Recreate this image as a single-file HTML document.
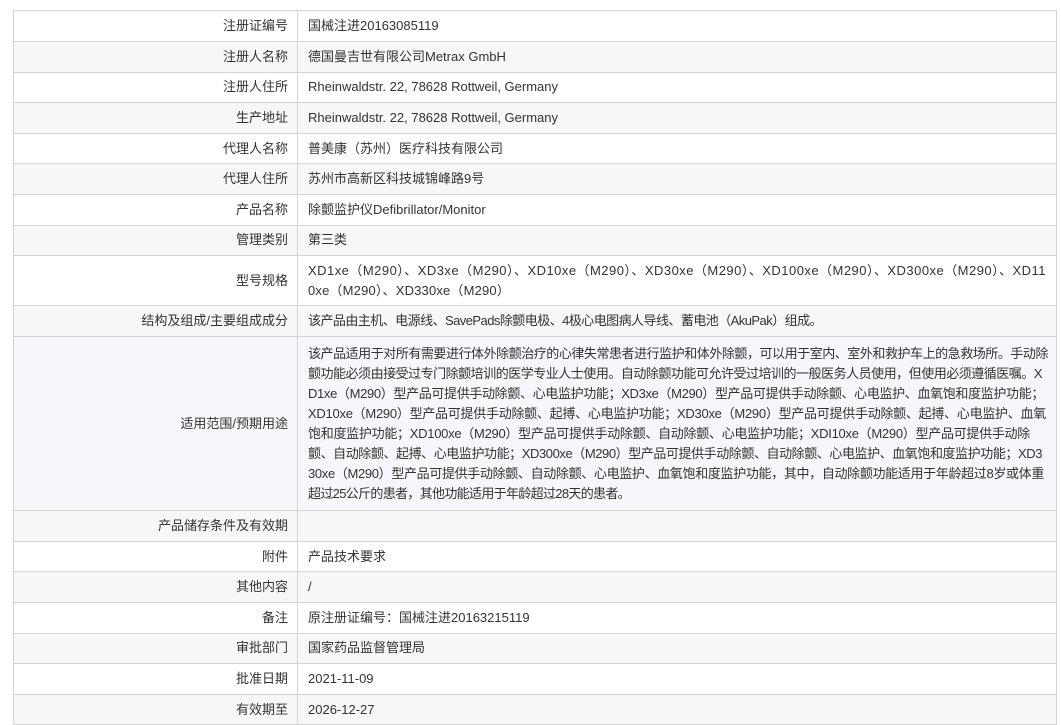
<!DOCTYPE html>
<html><head><meta charset="utf-8"><style>
body{margin:0;background:#fff;font-family:"Liberation Sans","Noto Sans CJK SC",sans-serif;font-size:13px;color:#333;}
table{position:absolute;left:13px;top:10px;width:1044px;border-collapse:collapse;table-layout:fixed;}
td{border:1px solid #d4d4d4;padding:0;line-height:20px;white-space:nowrap;overflow:hidden;}
td.l{width:274px;text-align:right;padding-right:9px;}
td.v{padding-left:10px;}
tr{height:30.6px;}
tr.g td{background:#f7f7f7;}
tr.b td{background:#f5f7fa;}
.fit{display:inline-block;white-space:nowrap;}
</style></head><body>
<table>
<tr style="height:31px"><td class="l">注册证编号</td><td class="v">国械注进20163085119</td></tr>
<tr class="g"><td class="l">注册人名称</td><td class="v">德国曼吉世有限公司Metrax GmbH</td></tr>
<tr><td class="l">注册人住所</td><td class="v">Rheinwaldstr. 22, 78628 Rottweil, Germany</td></tr>
<tr class="g"><td class="l">生产地址</td><td class="v">Rheinwaldstr. 22, 78628 Rottweil, Germany</td></tr>
<tr><td class="l">代理人名称</td><td class="v">普美康（苏州）医疗科技有限公司</td></tr>
<tr class="g"><td class="l">代理人住所</td><td class="v">苏州市高新区科技城锦峰路9号</td></tr>
<tr><td class="l">产品名称</td><td class="v">除颤监护仪Defibrillator/Monitor</td></tr>
<tr class="g"><td class="l">管理类别</td><td class="v">第三类</td></tr>
<tr style="height:50px"><td class="l">型号规格</td><td class="v"><span class="fit" data-w="738">XD1xe（M290）、XD3xe（M290）、XD10xe（M290）、XD30xe（M290）、XD100xe（M290）、XD300xe（M290）、XD11</span><br><span class="fit" data-w="202">0xe（M290）、XD330xe（M290）</span></td></tr>
<tr class="g" style="height:31px"><td class="l">结构及组成/主要组成成分</td><td class="v"><span class="fit" data-w="514">该产品由主机、电源线、SavePads除颤电极、4极心电图病人导线、蓄电池（AkuPak）组成。</span></td></tr>
<tr class="b" style="height:174px"><td class="l">适用范围/预期用途</td><td class="v"><span class="fit" data-w="740">该产品适用于对所有需要进行体外除颤治疗的心律失常患者进行监护和体外除颤，可以用于室内、室外和救护车上的急救场所。手动除</span><br><span class="fit" data-w="734">颤功能必须由接受过专门除颤培训的医学专业人士使用。自动除颤功能可允许受过培训的一般医务人员使用，但使用必须遵循医嘱。X</span><br><span class="fit" data-w="736">D1xe（M290）型产品可提供手动除颤、心电监护功能；XD3xe（M290）型产品可提供手动除颤、心电监护、血氧饱和度监护功能；</span><br><span class="fit" data-w="738">XD10xe（M290）型产品可提供手动除颤、起搏、心电监护功能；XD30xe（M290）型产品可提供手动除颤、起搏、心电监护、血氧</span><br><span class="fit" data-w="722">饱和度监护功能；XD100xe（M290）型产品可提供手动除颤、自动除颤、心电监护功能；XDI10xe（M290）型产品可提供手动除</span><br><span class="fit" data-w="734">颤、自动除颤、起搏、心电监护功能；XD300xe（M290）型产品可提供手动除颤、自动除颤、心电监护、血氧饱和度监护功能；XD3</span><br><span class="fit" data-w="736">30xe（M290）型产品可提供手动除颤、自动除颤、心电监护、血氧饱和度监护功能，其中，自动除颤功能适用于年龄超过8岁或体重</span><br><span class="fit" data-w="322">超过25公斤的患者，其他功能适用于年龄超过28天的患者。</span></td></tr>
<tr class="g"><td class="l">产品储存条件及有效期</td><td class="v"></td></tr>
<tr><td class="l">附件</td><td class="v">产品技术要求</td></tr>
<tr class="g"><td class="l">其他内容</td><td class="v">/</td></tr>
<tr><td class="l">备注</td><td class="v">原注册证编号：国械注进20163215119</td></tr>
<tr class="g"><td class="l">审批部门</td><td class="v">国家药品监督管理局</td></tr>
<tr><td class="l">批准日期</td><td class="v">2021-11-09</td></tr>
<tr class="g"><td class="l">有效期至</td><td class="v">2026-12-27</td></tr>
</table>
<script>
document.querySelectorAll('.fit').forEach(function(s){
  var t=+s.getAttribute('data-w');var w=s.getBoundingClientRect().width;
  var n=s.textContent.length;
  if(n>1){s.style.letterSpacing=((t-w)/n)+'px';}
});
</script>
</body></html>
